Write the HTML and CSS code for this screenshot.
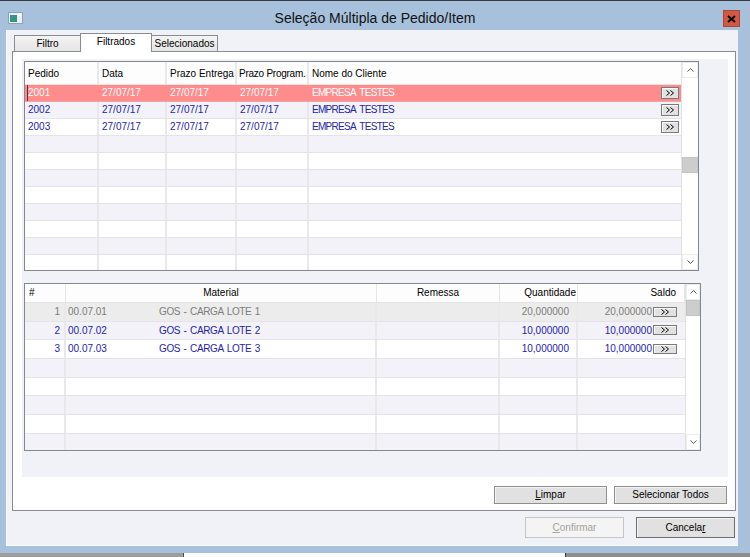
FILE: index.html
```html
<!DOCTYPE html>
<html lang="pt-BR">
<head>
<meta charset="utf-8">
<title>Seleção Múltipla de Pedido/Item</title>
<link rel="stylesheet" href="styles.css">
</head>
<body>
<div class="win">
  <div class="titlebar">
    <div class="tb-left">
      <svg class="app-icon" viewBox="0 0 15 12" width="15" height="12">
        <defs>
          <linearGradient id="ig" x1="0" y1="0" x2="1" y2="1">
            <stop offset="0" stop-color="#3b8fae"/>
            <stop offset="1" stop-color="#2f9a5a"/>
          </linearGradient>
        </defs>
        <rect x="0.5" y="0.5" width="14" height="11" fill="#e8eef2" stroke="#8ea4b4"/>
        <rect x="2" y="3" width="7" height="7" fill="url(#ig)"/>
        <rect x="10" y="2" width="3" height="2" fill="#ffffff"/>
      </svg>
    </div>
    <div class="title">Seleção Múltipla de Pedido/Item</div>
    <div class="tb-right">
      <div class="close">
        <svg viewBox="0 0 9 8" width="9" height="8"><path d="M1 1 L8 7 M8 1 L1 7" stroke="#000" stroke-width="2"/></svg>
      </div>
    </div>
  </div>

  <div class="client">
    <div class="tabs">
      <div class="tab tab-filtro">Filtro</div>
      <div class="tab tab-active">Filtrados</div>
      <div class="tab tab-sel">Selecionados</div>
    </div>

    <div class="panel">
      <div class="inner">
        <div class="grid grid-top">
          <div class="gbody">
            <div class="row head">
              <div class="c">Pedido</div>
              <div class="c">Data</div>
              <div class="c">Prazo Entrega</div>
              <div class="c tight">Prazo Program.</div>
              <div class="c last">Nome do Cliente</div>
            </div>
            <div class="row sel">
              <div class="c first-sel">2001</div>
              <div class="c">27/07/17</div>
              <div class="c">27/07/17</div>
              <div class="c">27/07/17</div>
              <div class="c last name"><span class="caps">EMPRESA TESTES</span><span class="mini"><svg viewBox="0 0 8 6" width="8" height="6"><path d="M0.5 0.5 L3.5 3 L0.5 5.5 M4.5 0.5 L7.5 3 L4.5 5.5" fill="none" stroke="#000"/></svg></span></div>
            </div>
            <div class="row">
              <div class="c">2002</div>
              <div class="c">27/07/17</div>
              <div class="c">27/07/17</div>
              <div class="c">27/07/17</div>
              <div class="c last name"><span class="caps">EMPRESA TESTES</span><span class="mini"><svg viewBox="0 0 8 6" width="8" height="6"><path d="M0.5 0.5 L3.5 3 L0.5 5.5 M4.5 0.5 L7.5 3 L4.5 5.5" fill="none" stroke="#000"/></svg></span></div>
            </div>
            <div class="row">
              <div class="c">2003</div>
              <div class="c">27/07/17</div>
              <div class="c">27/07/17</div>
              <div class="c">27/07/17</div>
              <div class="c last name"><span class="caps">EMPRESA TESTES</span><span class="mini"><svg viewBox="0 0 8 6" width="8" height="6"><path d="M0.5 0.5 L3.5 3 L0.5 5.5 M4.5 0.5 L7.5 3 L4.5 5.5" fill="none" stroke="#000"/></svg></span></div>
            </div>
            <div class="row"><div class="c"></div><div class="c"></div><div class="c"></div><div class="c"></div><div class="c last"></div></div>
            <div class="row"><div class="c"></div><div class="c"></div><div class="c"></div><div class="c"></div><div class="c last"></div></div>
            <div class="row"><div class="c"></div><div class="c"></div><div class="c"></div><div class="c"></div><div class="c last"></div></div>
            <div class="row"><div class="c"></div><div class="c"></div><div class="c"></div><div class="c"></div><div class="c last"></div></div>
            <div class="row"><div class="c"></div><div class="c"></div><div class="c"></div><div class="c"></div><div class="c last"></div></div>
            <div class="row"><div class="c"></div><div class="c"></div><div class="c"></div><div class="c"></div><div class="c last"></div></div>
            <div class="row"><div class="c"></div><div class="c"></div><div class="c"></div><div class="c"></div><div class="c last"></div></div>
            <div class="row"><div class="c"></div><div class="c"></div><div class="c"></div><div class="c"></div><div class="c last"></div></div>
          </div>
          <div class="vs vs-top">
            <div class="vs-btn"><svg viewBox="0 0 7 4" width="7" height="4"><path d="M0.5 3.5 L3.5 0.5 L6.5 3.5" fill="none" stroke="#555"/></svg></div>
            <div class="vs-track"><div class="thumb thumb-top"></div></div>
            <div class="vs-btn"><svg viewBox="0 0 7 4" width="7" height="4"><path d="M0.5 0.5 L3.5 3.5 L6.5 0.5" fill="none" stroke="#555"/></svg></div>
          </div>
        </div>

        <div class="grid grid-bottom">
          <div class="gbody">
            <div class="row head">
              <div class="c hash">#</div>
              <div class="c center">Material</div>
              <div class="c center">Remessa</div>
              <div class="c right qh">Quantidade</div>
              <div class="c right last sh">Saldo</div>
            </div>
            <div class="row dis">
              <div class="c num">1</div>
              <div class="c mat"><span class="code">00.07.01</span><span class="desc">GOS - CARGA LOTE 1</span></div>
              <div class="c"></div>
              <div class="c right qv">20,000000</div>
              <div class="c last saldo"><span>20,000000</span><span class="mini mini-b"><svg viewBox="0 0 8 6" width="8" height="6"><path d="M0.5 0.5 L3.5 3 L0.5 5.5 M4.5 0.5 L7.5 3 L4.5 5.5" fill="none" stroke="#000"/></svg></span></div>
            </div>
            <div class="row">
              <div class="c num">2</div>
              <div class="c mat"><span class="code">00.07.02</span><span class="desc">GOS - CARGA LOTE 2</span></div>
              <div class="c"></div>
              <div class="c right qv">10,000000</div>
              <div class="c last saldo"><span>10,000000</span><span class="mini mini-b"><svg viewBox="0 0 8 6" width="8" height="6"><path d="M0.5 0.5 L3.5 3 L0.5 5.5 M4.5 0.5 L7.5 3 L4.5 5.5" fill="none" stroke="#000"/></svg></span></div>
            </div>
            <div class="row">
              <div class="c num">3</div>
              <div class="c mat"><span class="code">00.07.03</span><span class="desc">GOS - CARGA LOTE 3</span></div>
              <div class="c"></div>
              <div class="c right qv">10,000000</div>
              <div class="c last saldo"><span>10,000000</span><span class="mini mini-b"><svg viewBox="0 0 8 6" width="8" height="6"><path d="M0.5 0.5 L3.5 3 L0.5 5.5 M4.5 0.5 L7.5 3 L4.5 5.5" fill="none" stroke="#000"/></svg></span></div>
            </div>
            <div class="row"><div class="c"></div><div class="c"></div><div class="c"></div><div class="c"></div><div class="c last"></div></div>
            <div class="row"><div class="c"></div><div class="c"></div><div class="c"></div><div class="c"></div><div class="c last"></div></div>
            <div class="row"><div class="c"></div><div class="c"></div><div class="c"></div><div class="c"></div><div class="c last"></div></div>
            <div class="row"><div class="c"></div><div class="c"></div><div class="c"></div><div class="c"></div><div class="c last"></div></div>
            <div class="row"><div class="c"></div><div class="c"></div><div class="c"></div><div class="c"></div><div class="c last"></div></div>
          </div>
          <div class="vs vs-bot">
            <div class="vs-btn"><svg viewBox="0 0 7 4" width="7" height="4"><path d="M0.5 3.5 L3.5 0.5 L6.5 3.5" fill="none" stroke="#555"/></svg></div>
            <div class="vs-track"><div class="thumb thumb-bot"></div></div>
            <div class="vs-btn"><svg viewBox="0 0 7 4" width="7" height="4"><path d="M0.5 0.5 L3.5 3.5 L6.5 0.5" fill="none" stroke="#555"/></svg></div>
          </div>
        </div>
      </div>

      <div class="btn-row">
        <div class="btn btn-sm"><u>L</u>impar</div>
        <div class="btn btn-sm">Selecionar Todos</div>
      </div>
    </div>

    <div class="footer">
      <div class="btn btn-lg disabled"><u>C</u>onfirmar</div>
      <div class="btn btn-lg default">Cancela<u>r</u></div>
    </div>
  </div>

  <div class="strip">
    <div class="s1"></div>
    <div class="s2"></div>
    <div class="s3"></div>
  </div>
</div>
</body>
</html>
```

FILE: styles.css
```css
* { box-sizing: border-box; }
html, body { margin: 0; padding: 0; }
body {
  width: 750px;
  height: 557px;
  overflow: hidden;
  font-family: "Liberation Sans", Arial, sans-serif;
  font-size: 10px;
  color: #000;
  background: #a7c1dc;
}
.win {
  height: 557px;
  display: flex;
  flex-direction: column;
  background: #a7c1dc;
  border-top: 1px solid #3a3a3a;
}

/* title bar */
.titlebar {
  height: 29px;
  display: grid;
  grid-template-columns: 1fr auto 1fr;
  align-items: start;
  padding-top: 8px;
}
.tb-left { padding-left: 8px; }
.app-icon { display: block; margin-top: 3px; }
.title {
  font-size: 14px;
  line-height: 17px;
  padding-top: 1px;
  color: #111;
}
.tb-right { display: flex; justify-content: flex-end; padding-right: 10px; }
.close {
  width: 17px;
  height: 17px;
  margin-top: 1px;
  background: #d2593f;
  border: 1px solid #a9473a;
  display: flex;
  align-items: center;
  justify-content: center;
}
.close svg { display: block; }

/* client area */
.client {
  margin: 0 12px 0 6px;
  height: 516px;
  background: #f1f1f8;
  border-left: 1px solid #fcfcfe;
  border-bottom: 1px solid #fcfcfe;
  padding: 3px 2px 0 5px;
  display: flex;
  flex-direction: column;
}

/* tabs */
.tabs {
  height: 18px;
  display: flex;
  align-items: flex-end;
  padding-left: 2px;
}
.tab {
  height: 16px;
  border: 1px solid #898c95;
  border-bottom: none;
  background: linear-gradient(#f4f4f4, #e5e5e5);
  line-height: 15px;
  text-align: center;
}
.tab-filtro { width: 67px; }
.tab-active {
  width: 72px;
  height: 19px;
  margin-left: -1px;
  margin-bottom: -1px;
  background: #fff;
  line-height: 16px;
  z-index: 2;
}
.tab-sel { width: 67px; margin-left: -1px; }

/* panel */
.panel {
  height: 460px;
  border: 1px solid #898c95;
  background: #fff;
  padding: 7px 7px 0 9px;
  display: flex;
  flex-direction: column;
}
.inner {
  height: 418px;
  background: #f1f1f8;
  padding: 2px 0 0 2px;
}

/* grids */
.grid {
  display: flex;
  border: 1px solid #828790;
  background: #fff;
  overflow: hidden;
}
.grid-top { width: 675px; height: 210px; }
.grid-bottom { width: 677px; height: 168px; margin-top: 12px; }
.gbody {
  flex: 1;
  display: flex;
  flex-direction: column;
  overflow: hidden;
}
.row {
  display: grid;
  flex: none;
  border-bottom: 1px solid #e3e3e9;
  background: #fff;
}
.row:nth-child(odd) { background: #f2f2f8; }
.grid-top .row { grid-template-columns: 74px 68px 70px 72px 372px; height: 17px; }
.grid-bottom .row { grid-template-columns: 41px 311px 123px 78px 107px; height: 18.67px; }
.row.head { background: #fdfdfd; border-bottom: 1px solid #e4e4e4; }
.grid-top .row.head { height: 23px; }
.grid-bottom .row.head { height: 19px; }

.c {
  border-right: 2px solid #e9e9ec;
  padding-left: 3px;
  white-space: nowrap;
  overflow: hidden;
  line-height: 16px;
  color: #2424ac;
}
.head .c { color: #000; line-height: 22px; padding-top: 1px; }
.head .c.tight { letter-spacing: -0.25px; padding-left: 2px; }
.grid-bottom .head .c { line-height: 18px; padding-top: 0; border-right: 1px solid #e6e6e6; }
.c.last { border-right: none; }
.grid-bottom .row:not(.head) .c { line-height: 17.67px; }

.row.sel { background: #ff8c8c; border-bottom-color: #f3a4a4; }
.row.sel .c { color: #fff; border-right-color: #ff8c8c; }
.first-sel { box-shadow: inset 2px 0 0 #ff8c8c, inset 3px 0 0 #5a3030; }

.caps { letter-spacing: -0.7px; word-spacing: 2px; }
.name { display: flex; justify-content: space-between; align-items: center; padding-right: 2px; }

.mini {
  width: 18px;
  height: 12px;
  flex: none;
  background: #e1e1e1;
  border: 1px solid #7a7a7a;
  box-shadow: inset 1px 1px 0 #fafafa;
  display: flex;
  align-items: center;
  justify-content: center;
}
.mini svg { display: block; }
.mini-b { width: 24px; height: 10px; margin-left: 1px; }

/* bottom grid cells */
.hash { padding-left: 4px; }
.center { text-align: center; padding-left: 0; }
.right { text-align: right; padding-left: 0; }
.qh { padding-right: 1px; }
.sh { padding-right: 8px; }
.num { text-align: right; padding-right: 4px; padding-left: 0; }
.mat { display: flex; padding-left: 2px; }
.code { width: 91px; flex: none; }
.desc { letter-spacing: -0.35px; word-spacing: 1px; }
.qv { padding-right: 7px; }
.saldo {
  display: flex;
  justify-content: flex-end;
  align-items: center;
  padding-right: 8px;
}
.row.dis { background: #ececec; }
.row.dis .c { color: #7c7c7c; }

/* scrollbars */
.vs {
  flex: none;
  display: flex;
  flex-direction: column;
  background: #fff;
  border-left: 1px solid #e2e2e2;
}
.vs-top { width: 17px; }
.vs-bot { width: 15px; }
.vs-btn {
  height: 16px;
  flex: none;
  border: 1px solid #ececec;
  display: flex;
  align-items: center;
  justify-content: center;
  background: #fff;
}
.vs-btn svg { display: block; }
.vs-track { flex: 1; }
.thumb {
  height: 16px;
  background: #cdcdcd;
  border: 1px solid #c4c4c4;
}
.thumb-top { margin-top: 79px; }
.thumb-bot { margin-top: 0; }

/* buttons */
.btn-row {
  display: flex;
  justify-content: flex-end;
  gap: 7px;
  margin-top: 9px;
  padding-right: 1px;
}
.btn {
  background: #e1e1e1;
  border: 1px solid #8f8f8f;
  box-shadow: inset 1px 1px 0 #f4f4f4;
  text-align: center;
  color: #000;
}
.btn-sm { width: 113px; height: 18px; line-height: 16px; }
.footer {
  display: flex;
  justify-content: flex-end;
  gap: 12px;
  margin-top: 6px;
  padding-right: 1px;
}
.btn-lg { width: 99px; height: 21px; line-height: 19px; }
.btn.disabled {
  background: #f4f4f4;
  border-color: #c6c6c6;
  box-shadow: none;
  color: #a2a2a2;
}
.btn.default { border-color: #6e6e6e; }

/* bottom strip */
.strip {
  height: 4px;
  margin-top: 7px;
  display: flex;
}
.s1 { width: 183px; background: #9d9d9d; }
.s2 { width: 382px; background: #fbfbfb; border-left: 1px solid #4a4a4a; }
.s3 { flex: 1; background: #8e8e8e; border-left: 1px solid #3a3a3a; }
```
